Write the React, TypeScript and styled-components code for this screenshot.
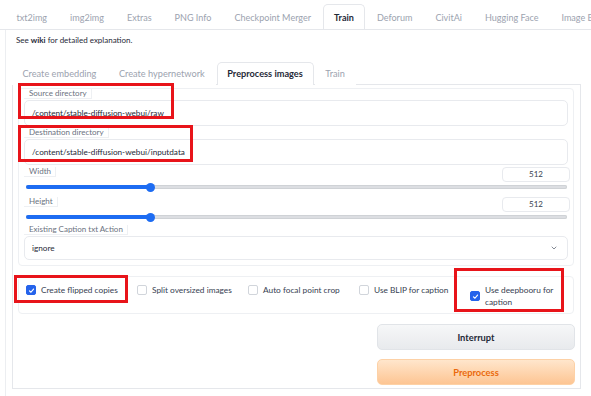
import React from 'react';
import styled, { createGlobalStyle } from 'styled-components';

const GlobalStyle = createGlobalStyle`
  html, body {
    margin: 0;
    padding: 0;
    background: #ffffff;
  }
  body {
    font-family: Lato, "Open Sans", "Liberation Sans", sans-serif;
    color: #374151;
    width: 591px;
    height: 396px;
    overflow: hidden;
  }
  * {
    box-sizing: border-box;
  }
`;

const topTabs = ['txt2img', 'img2img', 'Extras', 'PNG Info', 'Checkpoint Merger', 'Train', 'Deforum', 'CivitAi', 'Hugging Face', 'Image Browser'];
const subTabs = ['Create embedding', 'Create hypernetwork', 'Preprocess images', 'Train'];

const options = [
  { label: 'Create flipped copies', checked: true },
  { label: 'Split oversized images', checked: false },
  { label: 'Auto focal point crop', checked: false },
  { label: 'Use BLIP for caption', checked: false },
  { label: 'Use deepbooru for caption', checked: true, wrap: true },
];

// red annotation frames drawn over the screenshot
const marks = [
  { x: 18, y: 83, w: 156, h: 36 },
  { x: 18, y: 125, w: 175, h: 37 },
  { x: 14, y: 275, w: 114, h: 28 },
  { x: 454, y: 268, w: 110, h: 44 },
];

const sliderPos = ((150 - 26) / (566 - 26)) * 100;

const App: React.FC = () => {
  return (
    <Page>
      <GlobalStyle />
      <TabBar>
        {topTabs.map((t) => (
          <TopTab key={t} $active={t === 'Train'}>{t}</TopTab>
        ))}
      </TabBar>
      <MainPanel>
        <Hint>
          See <b>wiki</b> for detailed explanation.
        </Hint>
        <SubTabBar>
          {subTabs.map((t, i) => (
            <SubTab key={t + i} $active={i === 2}>{t}</SubTab>
          ))}
        </SubTabBar>
        <SubPanel>
          <FieldGroup>
            <Field>
              <Label>Source directory</Label>
              <TextBox>/content/stable-diffusion-webui/raw</TextBox>
            </Field>
            <Field $gap>
              <Label>Destination directory</Label>
              <TextBox>/content/stable-diffusion-webui/inputdata</TextBox>
            </Field>
            <SliderField>
              <SliderHead>
                <Label>Width</Label>
                <NumberBox>512</NumberBox>
              </SliderHead>
              <Track>
                <Fill style={{ width: `${sliderPos}%` }} />
                <Thumb style={{ left: `${sliderPos}%` }} />
              </Track>
            </SliderField>
            <SliderField>
              <SliderHead>
                <Label>Height</Label>
                <NumberBox>512</NumberBox>
              </SliderHead>
              <Track>
                <Fill style={{ width: `${sliderPos}%` }} />
                <Thumb style={{ left: `${sliderPos}%` }} />
              </Track>
            </SliderField>
            <Field>
              <Label>Existing Caption txt Action</Label>
              <Select>
                <span>ignore</span>
                <svg width="8" height="8" viewBox="0 0 24 24" fill="none" stroke="#6b7280" strokeWidth="2.5" strokeLinecap="round" strokeLinejoin="round">
                  <path d="M6 9l6 6 6-6" />
                </svg>
              </Select>
            </Field>
          </FieldGroup>
          <CheckRow>
            {options.map((o) => (
              <CheckItem key={o.label} $wrap={o.wrap}>
                <Box $checked={o.checked}>
                  {o.checked && (
                    <svg width="7" height="7" viewBox="0 0 12 12" fill="none" stroke="#fff" strokeWidth="2" strokeLinecap="round" strokeLinejoin="round">
                      <path d="M2.5 6.5l2.5 2.5 4.5-5.5" />
                    </svg>
                  )}
                </Box>
                <CheckText $wrap={o.wrap}>{o.label}</CheckText>
              </CheckItem>
            ))}
          </CheckRow>
          <Actions>
            <Button>Interrupt</Button>
            <Button $primary>Preprocess</Button>
          </Actions>
        </SubPanel>
      </MainPanel>
      {marks.map((m, i) => (
        <Mark key={i} style={{ left: m.x, top: m.y, width: m.w, height: m.h }} />
      ))}
    </Page>
  );
};

const Page = styled.div`
  position: relative;
  width: 591px;
  height: 396px;
  overflow: hidden;
`;

const TabBar = styled.div`
  display: flex;
  height: 30px;
  padding: 4px 0 0 5px;
  border-bottom: 1px solid #e5e7eb;
  white-space: nowrap;
  overflow: hidden;
`;

const TopTab = styled.div<{ $active?: boolean }>`
  padding: 0 10.5px;
  font-size: 9.05px;
  line-height: 25px;
  color: ${(p) => (p.$active ? '#1f2937' : '#9ca3af')};
  font-weight: ${(p) => (p.$active ? 700 : 400)};
  border: 1px solid ${(p) => (p.$active ? '#e5e7eb' : 'transparent')};
  border-bottom: none;
  border-radius: 5px 5px 0 0;
  background: #fff;
  margin-bottom: -1px;
  flex-shrink: 0;
`;

const MainPanel = styled.div`
  margin: 0 10px 0 5px;
  height: 366px;
  border-left: 1px solid #eceef1;
  padding: 4px 0 0 6px;
`;

const Hint = styled.div`
  font-size: 8px;
  line-height: 12px;
  color: #1f2937;
  padding-left: 4px;
  b {
    font-weight: 700;
  }
`;

const SubTabBar = styled.div`
  display: flex;
  margin-top: 16px;
  height: 23px;
  border-bottom: 1px solid #e5e7eb;
`;

const SubTab = styled.div<{ $active?: boolean }>`
  padding: 0 10px 0 9.5px;
  font-size: 9.2px;
  line-height: 22px;
  color: ${(p) => (p.$active ? '#1f2937' : '#9ca3af')};
  font-weight: ${(p) => (p.$active ? 700 : 400)};
  border: 1px solid ${(p) => (p.$active ? '#e5e7eb' : 'transparent')};
  border-bottom: none;
  border-radius: 5px 5px 0 0;
  background: #fff;
  margin-bottom: -1px;
  margin-right: 1px;
`;

const SubPanel = styled.div`
  border: 1px solid #e5e7eb;
  border-top: none;
  height: 304px;
  padding: 3px 6px 0 5px;
`;

const FieldGroup = styled.div`
  border: 1px solid #eef0f3;
  border-radius: 4px;
  padding: 0 5px 5px 5px;
  display: flex;
  flex-direction: column;
`;

const Field = styled.div<{ $gap?: boolean }>`
  display: flex;
  flex-direction: column;
  margin-top: ${(p) => (p.$gap ? '2px' : '0')};
`;

const Label = styled.span`
  align-self: flex-start;
  height: 10px;
  font-size: 8px;
  line-height: 9px;
  color: #6b7280;
  padding: 0 4px 0 5px;
  border: 1px solid #eef0f3;
  border-top: none;
  border-left: none;
  background: #fff;
`;

const TextBox = styled.div`
  height: 26px;
  margin-top: 1px;
  border: 1px solid #e8eaee;
  border-radius: 5px;
  font-size: 8.2px;
  line-height: 24px;
  padding-left: 7px;
  color: #1f2937;
`;

const SliderField = styled.div`
  display: flex;
  flex-direction: column;
  margin-top: 2px;
  margin-bottom: 6px;
`;

const SliderHead = styled.div`
  display: flex;
  justify-content: space-between;
  align-items: flex-start;
  height: 15px;
`;

const NumberBox = styled.div`
  width: 68px;
  height: 15px;
  border: 1px solid #e8eaee;
  border-radius: 4px;
  font-size: 8px;
  line-height: 13px;
  text-align: center;
  color: #374151;
  margin-right: -2px;
`;

const Track = styled.div`
  position: relative;
  height: 4px;
  margin: 3px 1px 0 2px;
  border-radius: 2px;
  background: #dcdee2;
  box-shadow: inset 0 0 0 1px #cfd2d6;
`;

const Fill = styled.div`
  height: 100%;
  border-radius: 2px;
  background: #1d6cf2;
`;

const Thumb = styled.div`
  position: absolute;
  top: 50%;
  width: 9px;
  height: 9px;
  margin: -4.5px 0 0 -4.5px;
  border-radius: 50%;
  background: #1d6cf2;
`;

const Select = styled.div`
  height: 24px;
  margin-top: 1px;
  border: 1px solid #e8eaee;
  border-radius: 5px;
  display: flex;
  align-items: center;
  justify-content: space-between;
  padding: 0 9px 0 7px;
  font-size: 8.2px;
  color: #1f2937;
`;

const CheckRow = styled.div`
  display: flex;
  align-items: flex-start;
  margin-top: 10px;
  height: 38px;
  border: 1px solid #eef0f3;
  border-radius: 4px;
  padding: 7px 0 0 7px;
`;

const CheckItem = styled.div<{ $wrap?: boolean }>`
  display: flex;
  align-items: center;
  width: ${(p) => (p.$wrap ? '92px' : '111px')};
  height: ${(p) => (p.$wrap ? 'auto' : '12px')};
  flex-shrink: 0;
`;

const Box = styled.span<{ $checked?: boolean }>`
  width: 10px;
  height: 10px;
  flex-shrink: 0;
  border-radius: 2px;
  border: 1px solid ${(p) => (p.$checked ? '#2563eb' : '#d1d5db')};
  background: ${(p) => (p.$checked ? '#2563eb' : '#fff')};
  display: flex;
  align-items: center;
  justify-content: center;
  margin-right: 5px;
`;

const CheckText = styled.span<{ $wrap?: boolean }>`
  font-size: 8.3px;
  line-height: 12px;
  color: #374151;
  white-space: ${(p) => (p.$wrap ? 'normal' : 'nowrap')};
  width: ${(p) => (p.$wrap ? '72px' : 'auto')};
`;

const Actions = styled.div`
  display: flex;
  flex-direction: column;
  align-items: flex-end;
  gap: 9px;
  margin-top: 10px;
  margin-right: -1px;
`;

const Button = styled.div<{ $primary?: boolean }>`
  width: 198px;
  height: 26px;
  border-radius: 5px;
  display: flex;
  align-items: center;
  justify-content: center;
  font-size: 9.3px;
  font-weight: 700;
  color: ${(p) => (p.$primary ? '#ea6a0c' : '#1f2937')};
  background: ${(p) =>
    p.$primary
      ? 'linear-gradient(to bottom, #ffe6cc, #fdc593)'
      : 'linear-gradient(to bottom, #f6f7f8, #e8eaed)'};
  border: 1px solid ${(p) => (p.$primary ? '#fdd1a6' : '#e1e4e8')};
`;

const Mark = styled.div`
  position: absolute;
  border: 3px solid #e8141a;
  pointer-events: none;
`;

export default App;
